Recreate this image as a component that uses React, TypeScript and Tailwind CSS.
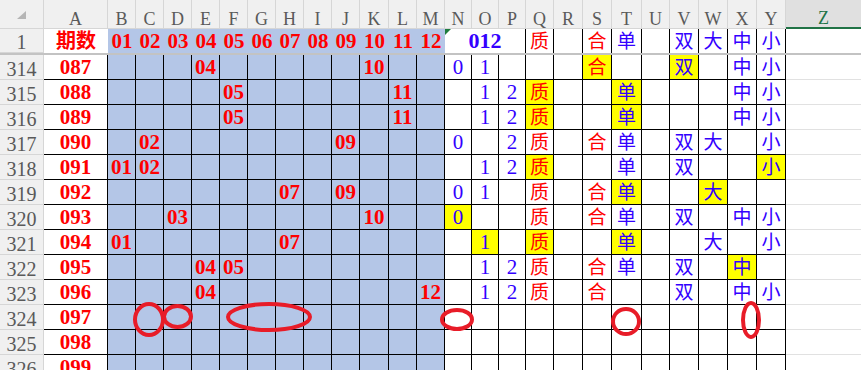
import React from "react";

const COLS = [
  { k: "A", w: "w-[64px]" },
  { k: "B", w: "w-[28px]" },
  { k: "C", w: "w-[28px]" },
  { k: "D", w: "w-[28px]" },
  { k: "E", w: "w-[28px]" },
  { k: "F", w: "w-[28px]" },
  { k: "G", w: "w-[28px]" },
  { k: "H", w: "w-[28px]" },
  { k: "I", w: "w-[28px]" },
  { k: "J", w: "w-[28px]" },
  { k: "K", w: "w-[29px]" },
  { k: "L", w: "w-[28px]" },
  { k: "M", w: "w-[28px]" },
  { k: "N", w: "w-[27px]" },
  { k: "O", w: "w-[27px]" },
  { k: "P", w: "w-[27px]" },
  { k: "Q", w: "w-[28px]" },
  { k: "R", w: "w-[29px]" },
  { k: "S", w: "w-[29px]" },
  { k: "T", w: "w-[30px]" },
  { k: "U", w: "w-[28px]" },
  { k: "V", w: "w-[29px]" },
  { k: "W", w: "w-[29px]" },
  { k: "X", w: "w-[29px]" },
  { k: "Y", w: "w-[29px]" },
];

const BLUE_BG = "BCDEFGHIJKLM";
const DIGITS = "NOP";
const RED_CJK = "QS";

type Row = { n: string; a: string; c?: Record<string, string>; hl?: string[] };

const rows: Row[] = [
  { n: "314", a: "087", c: { E: "04", K: "10", N: "0", O: "1", S: "合", V: "双", X: "中", Y: "小" }, hl: ["S", "V"] },
  { n: "315", a: "088", c: { F: "05", L: "11", O: "1", P: "2", Q: "质", T: "单", X: "中", Y: "小" }, hl: ["Q", "T"] },
  { n: "316", a: "089", c: { F: "05", L: "11", O: "1", P: "2", Q: "质", T: "单", X: "中", Y: "小" }, hl: ["Q", "T"] },
  { n: "317", a: "090", c: { C: "02", J: "09", N: "0", P: "2", Q: "质", S: "合", T: "单", V: "双", W: "大", Y: "小" } },
  { n: "318", a: "091", c: { B: "01", C: "02", O: "1", P: "2", Q: "质", T: "单", V: "双", Y: "小" }, hl: ["Q", "Y"] },
  { n: "319", a: "092", c: { H: "07", J: "09", N: "0", O: "1", Q: "质", S: "合", T: "单", W: "大" }, hl: ["T", "W"] },
  { n: "320", a: "093", c: { D: "03", K: "10", N: "0", Q: "质", S: "合", T: "单", V: "双", X: "中", Y: "小" }, hl: ["N"] },
  { n: "321", a: "094", c: { B: "01", H: "07", O: "1", Q: "质", T: "单", W: "大", Y: "小" }, hl: ["O", "Q", "T"] },
  { n: "322", a: "095", c: { E: "04", F: "05", O: "1", P: "2", Q: "质", S: "合", T: "单", V: "双", X: "中" }, hl: ["X"] },
  { n: "323", a: "096", c: { E: "04", M: "12", O: "1", P: "2", Q: "质", S: "合", V: "双", X: "中", Y: "小" } },
  { n: "324", a: "097" },
  { n: "325", a: "098" },
  { n: "326", a: "099" },
];

const topRow = ["质", "", "合", "单", "", "双", "大", "中", "小"];

function textClass(k: string) {
  if (k === "A" || BLUE_BG.includes(k))
    return "text-[#ff0000] font-bold text-[21px] font-[Liberation_Serif,Noto_Sans_CJK_SC,serif]";
  if (DIGITS.includes(k)) return "text-[#3300ff] text-[21px] font-[Liberation_Serif,serif]";
  if (RED_CJK.includes(k)) return "text-[#ff0000] text-[19px] font-[Liberation_Serif,Noto_Sans_CJK_SC,sans-serif]";
  return "text-[#3300ff] text-[19px] font-[Liberation_Serif,Noto_Sans_CJK_SC,sans-serif]";
}

function bgClass(k: string, yellow: boolean) {
  if (yellow) return "bg-[#ffff00]";
  if (BLUE_BG.includes(k)) return "bg-[#b4c6e7]";
  return "bg-white";
}

function RowHead({ label, h }: { label: string; h: string }) {
  return (
    <div
      className={`${h} w-[44px] shrink-0 flex items-center justify-center pt-[3px] bg-[#f0f0f0] border-r border-b border-[#d6d6d6] text-[#595959] text-[20px] font-[Liberation_Serif,serif]`}
    >
      {label}
    </div>
  );
}

export default function App() {
  return (
    <div className="relative w-[861px] h-[370px] overflow-hidden bg-white leading-none">
      {/* column header */}
      <div className="flex h-[29px]">
        <div className="w-[44px] shrink-0 flex items-end justify-end pr-[17px] pb-[9px] bg-[#f0f0f0] border-r border-b border-[#d6d6d6]">
          <svg width="9" height="8" viewBox="0 0 9 8">
            <polygon points="9,0 9,8 0,8" fill="#b5b5b5" />
          </svg>
        </div>
        {COLS.map((c) => (
          <div
            key={c.k}
            className={`${c.w} shrink-0 flex items-center justify-center pt-[9px] bg-[#f0f0f0] border-r border-b border-[#d6d6d6] text-[#5a5a5a] text-[18px] font-[Liberation_Serif,serif]`}
          >
            {c.k}
          </div>
        ))}
        <div className="flex-1 flex items-center justify-center pt-[9px] bg-[#e0e0e0] border-b-2 border-[#217346] text-[#217346] text-[18px] font-[Liberation_Serif,serif]">
          Z
        </div>
      </div>

      {/* row 1 */}
      <div className="flex h-[24px]">
        <RowHead label="1" h="h-[24px]" />
        <div className="w-[64px] shrink-0 flex items-center justify-center bg-white text-[#ff0000] font-bold text-[20px] font-[Liberation_Serif,Noto_Sans_CJK_SC,serif]">
          期数
        </div>
        {COLS.slice(1, 13).map((c, i) => (
          <div key={c.k} className={`${c.w} shrink-0 flex items-center justify-center bg-[#b4c6e7] ${textClass(c.k)}`}>
            {String(i + 1).padStart(2, "0")}
          </div>
        ))}
        <div className="relative w-[81px] shrink-0 flex items-center justify-center bg-white border-r border-black text-[#3300ff] font-bold text-[22px] font-[Liberation_Serif,serif]">
          <span className="absolute left-0 top-0 w-0 h-0 border-t-[6px] border-r-[6px] border-t-[#1e7b3c] border-r-transparent" />
          012
        </div>
        {COLS.slice(16).map((c, i) => (
          <div key={c.k} className={`${c.w} shrink-0 flex items-center justify-center bg-white border-r border-black ${textClass(c.k)}`}>
            {topRow[i]}
          </div>
        ))}
        <div className="flex-1 bg-white" />
      </div>

      {/* frozen pane split */}
      <div className="h-[2px] bg-[#c3c3c3]" />

      {rows.map((r) => (
        <div key={r.n} className="flex h-[25px]">
          <RowHead label={r.n} h="h-[25px]" />
          {COLS.map((c) => {
            const yellow = (r.hl || []).includes(c.k);
            const text = c.k === "A" ? r.a : r.c?.[c.k] || "";
            return (
              <div
                key={c.k}
                className={`${c.w} shrink-0 flex items-center justify-center border-r border-b border-black ${bgClass(c.k, yellow)} ${textClass(c.k)}`}
              >
                {text}
              </div>
            );
          })}
          <div className="flex-1 bg-white border-b border-[#e1e1e1]" />
        </div>
      ))}

      {/* hand-drawn marks */}
      <svg className="absolute inset-0 pointer-events-none" width="861" height="370">
        <g fill="none" stroke="#e81c28" strokeWidth="4">
          <ellipse cx="149" cy="319.5" rx="14" ry="15.5" />
          <ellipse cx="177.5" cy="316.5" rx="13.5" ry="10.5" />
          <ellipse cx="269" cy="317" rx="41" ry="13" />
          <ellipse cx="457" cy="319.5" rx="15" ry="9.5" />
          <ellipse cx="626" cy="321.5" rx="13" ry="12.5" />
          <ellipse cx="751" cy="320" rx="8" ry="17" />
        </g>
      </svg>
    </div>
  );
}
